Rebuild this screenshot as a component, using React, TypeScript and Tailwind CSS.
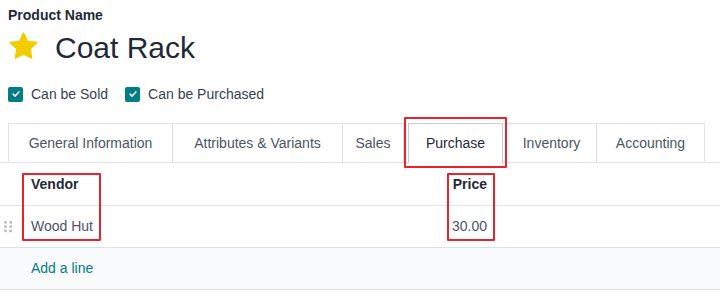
import React from 'react';

const tabs = [
  { label: 'General Information', w: 'w-[165px]' },
  { label: 'Attributes & Variants', w: 'w-[170px]' },
  { label: 'Sales', w: 'w-[61px]' },
];

const Check = ({ label }: { label: string }) => (
  <div className="flex items-center gap-[8px]">
    <span className="w-[15px] h-[15px] rounded-[2px] bg-[#017e84] flex items-center justify-center">
      <svg viewBox="0 0 12 12" className="w-[10px] h-[10px]">
        <path d="M2.5 6.2 L5 8.5 L9.5 3.5" fill="none" stroke="white" strokeWidth="1.8" strokeLinecap="round" strokeLinejoin="round" />
      </svg>
    </span>
    <span className="text-[14px] text-[#374151]">{label}</span>
  </div>
);

const App: React.FC = () => {
  return (
    <div className="w-[720px] h-[297px] bg-white overflow-hidden font-['Liberation_Sans',sans-serif] text-[#212529]">
      <div className="px-2 pt-[6px]">
        <div className="text-[14px] leading-[18px] font-bold text-[#1f2937]">Product Name</div>
        <div className="mt-[6px] h-[36px] flex items-center">
          <svg viewBox="0 0 24 24" className="w-[31px] h-[31px] -mt-[4px]">
            <path
              d="M12 1.6 L15.1 8.1 L22.2 9 L17 13.9 L18.3 21 L12 17.6 L5.7 21 L7 13.9 L1.8 9 L8.9 8.1 Z"
              fill="#f3cc00"
              stroke="#f3cc00"
              strokeWidth="1.2"
              strokeLinejoin="round"
            />
          </svg>
          <span className="ml-[16px] text-[30px] leading-[36px] text-[#1f2937]">Coat Rack</span>
        </div>
        <div className="mt-[18px] h-[20px] flex items-center gap-[17px]">
          <Check label="Can be Sold" />
          <Check label="Can be Purchased" />
        </div>
      </div>

      <div className="mt-[19px] flex border-b border-[#dee2e6] pl-2 h-[40px]">
        {tabs.map((t, i) => (
          <div
            key={t.label}
            className={`${t.w} h-[39px] border-t border-r border-[#dee2e6] ${i === 0 ? 'border-l' : ''} flex items-center justify-center text-[14px] text-[#4b5563]`}
          >
            {t.label}
          </div>
        ))}
        <div className="relative w-[103px] h-[40px] -mb-px">
          <div className="mx-[4px] h-[40px] border-t border-l border-r border-[#c9cdd2] bg-white flex items-center justify-center text-[14px] text-[#1f2937]">
            Purchase
          </div>
          <div className="absolute left-0 right-0 -top-[6px] -bottom-[5px] border-2 border-[#e5242b] rounded-[1px]" />
        </div>
        <div className="w-[90px] h-[39px] border-t border-r border-[#dee2e6] flex items-center justify-center text-[14px] text-[#4b5563]">
          Inventory
        </div>
        <div className="w-[108px] h-[39px] border-t border-r border-[#dee2e6] flex items-center justify-center text-[14px] text-[#4b5563]">
          Accounting
        </div>
      </div>

      <div className="relative text-[14px]">
        <div className="h-[43px] flex items-center border-b border-[#dee2e6] font-bold text-[#1f2937]">
          <div className="w-[22px]" />
          <div className="w-[418px] pl-[9px]">Vendor</div>
          <div className="w-[47px] text-right">Price</div>
        </div>
        <div className="h-[42px] flex items-center border-b border-[#dee2e6] text-[#4b5563]">
          <div className="w-[22px] flex justify-center">
            <svg viewBox="0 0 10 14" className="w-[9px] h-[12px] -ml-[6px]">
              <g fill="#b9bdc2">
                <rect x="0" y="0" width="3" height="3" />
                <rect x="6" y="0" width="3" height="3" />
                <rect x="0" y="5" width="3" height="3" />
                <rect x="6" y="5" width="3" height="3" />
                <rect x="0" y="10" width="3" height="3" />
                <rect x="6" y="10" width="3" height="3" />
              </g>
            </svg>
          </div>
          <div className="w-[418px] pl-[9px]">Wood Hut</div>
          <div className="w-[47px] text-right">30.00</div>
        </div>
        <div className="h-[42px] flex items-center border-b border-[#dee2e6] bg-[#f9fafb]">
          <div className="w-[22px]" />
          <div className="pl-[9px] text-[#017e84]">Add a line</div>
        </div>
        <div className="absolute left-[22px] top-[10px] w-[79px] h-[68px] border-2 border-[#e5242b] rounded-[1px]" />
        <div className="absolute left-[447px] top-[10px] w-[48px] h-[68px] border-2 border-[#e5242b] rounded-[1px]" />
      </div>
    </div>
  );
};

export default App;
